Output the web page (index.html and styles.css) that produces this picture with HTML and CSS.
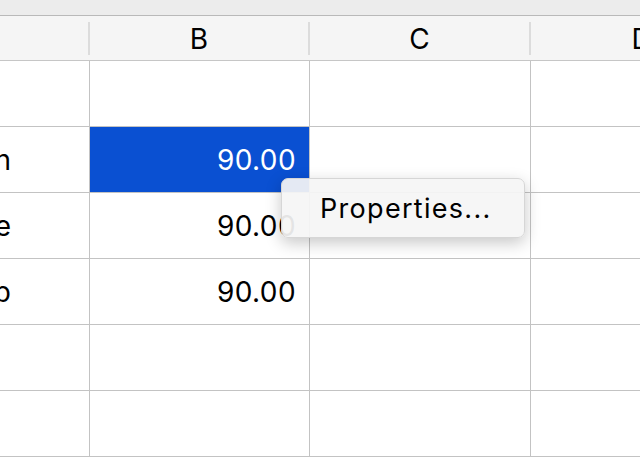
FILE: index.html
```html
<!DOCTYPE html>
<html lang="en">
<head>
    <meta charset="UTF-8">
    <meta name="viewport" content="width=device-width, initial-scale=1.0">
    <title>Sheet</title>
    <link rel="stylesheet" href="styles.css">
</head>
<body>
    <div class="toolbar"></div>

    <div class="sheet">
        <div class="head col-a"><div class="head-label"></div></div>
        <div class="head col-b"><div class="head-label">B</div></div>
        <div class="head col-c"><div class="head-label">C</div></div>
        <div class="head col-d"><div class="head-label">D</div></div>

        <div class="cell label"></div>
        <div class="cell"></div>
        <div class="cell"></div>
        <div class="cell"></div>

        <div class="cell label">Kitchen</div>
        <div class="cell number selected">90.00</div>
        <div class="cell"></div>
        <div class="cell"></div>

        <div class="cell label">Garage</div>
        <div class="cell number">90.00</div>
        <div class="cell"></div>
        <div class="cell"></div>

        <div class="cell label">Workshop</div>
        <div class="cell number">90.00</div>
        <div class="cell"></div>
        <div class="cell"></div>

        <div class="cell label"></div>
        <div class="cell"></div>
        <div class="cell"></div>
        <div class="cell"></div>

        <div class="cell label"></div>
        <div class="cell"></div>
        <div class="cell"></div>
        <div class="cell"></div>
    </div>

    <div class="context-menu">
        <div class="menu-item">Properties...</div>
    </div>
</body>
</html>
```

FILE: styles.css
```css
body {
    margin: 0;
    font-family: Inter, "Liberation Sans", sans-serif;
    background-color: #ffffff;
    overflow: hidden;
    height: 457px;
    position: relative;
}
.toolbar {
    height: 15px;
    background-color: #ececec;
    border-bottom: 1px solid #b9b9b9;
}
.sheet {
    display: grid;
    grid-template-columns: 210px 220px 221px 221px;
    margin-left: -120px;
}
.head {
    background-color: #f5f5f5;
    border-bottom: 1px solid #c6c6c6;
    padding: 6px 0 5px;
    height: 33px;
}
.head-label {
    height: 33px;
    border-right: 2px solid #dcdcdc;
    display: flex;
    align-items: center;
    justify-content: center;
    font-size: 28px;
    color: #000;
}
.col-d .head-label {
    border-right: none;
}
.cell {
    height: 65px;
    border-right: 1px solid #c3c3c3;
    border-bottom: 1px solid #c3c3c3;
    display: flex;
    align-items: center;
    font-size: 28px;
    color: #000;
}
.label {
    justify-content: flex-end;
    padding-right: 78px;
}
.number {
    justify-content: flex-end;
    padding-right: 13px;
    letter-spacing: 0.4px;
}
.selected {
    background-color: #0a50d2;
    color: #ffffff;
}
.context-menu {
    position: absolute;
    left: 281px;
    top: 178px;
    width: 242px;
    height: 58px;
    background-color: rgba(245, 245, 245, 0.93);
    border: 1px solid #d6d6d6;
    border-radius: 7px;
    box-shadow: 0 5px 16px rgba(0, 0, 0, 0.22);
    display: flex;
    align-items: center;
}
.menu-item {
    padding-left: 38px;
    font-size: 27px;
    letter-spacing: 1.3px;
    color: #000;
}
```
